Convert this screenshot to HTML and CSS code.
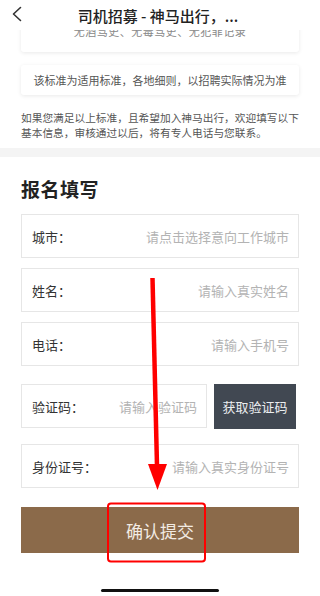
FILE: index.html
```html
<!DOCTYPE html>
<html>
<head>
    <title>司机招募</title>
    <link rel="stylesheet" href="styles.css">
</head>
<body>
    <div class="page">
        <div class="header">
            <svg class="back" width="12" height="16" viewBox="0 0 12 16">
                <path d="M9.5 1.5 L2.5 8 L9.5 14.5" fill="none" stroke="#333" stroke-width="1.6" stroke-linecap="round" stroke-linejoin="round"/>
            </svg>
            <div class="title">司机招募 - 神马出行，...</div>
        </div>

        <div class="intro">
            <div class="card card-top">无酒驾史、无毒驾史、无犯罪记录</div>
            <div class="card card-rule">该标准为适用标准，各地细则，以招聘实际情况为准</div>
            <p class="note">如果您满足以上标准，且希望加入神马出行，欢迎填写以下基本信息，审核通过以后，将有专人电话与您联系。</p>
        </div>

        <div class="band"></div>

        <form class="form">
            <h2>报名填写</h2>
            <div class="field">
                <span class="label">城市：</span>
                <span class="hint">请点击选择意向工作城市</span>
            </div>
            <div class="field">
                <span class="label">姓名：</span>
                <span class="hint">请输入真实姓名</span>
            </div>
            <div class="field">
                <span class="label">电话：</span>
                <span class="hint">请输入手机号</span>
            </div>
            <div class="code-row">
                <div class="field code-field">
                    <span class="label">验证码：</span>
                    <span class="hint">请输入验证码</span>
                </div>
                <button type="button" class="code-btn">获取验证码</button>
            </div>
            <div class="field field-id">
                <span class="label">身份证号：</span>
                <span class="hint">请输入真实身份证号</span>
            </div>
            <button type="button" class="submit">确认提交</button>
        </form>

        <div class="home-bar"></div>

        <!-- annotation drawn over the screenshot -->
        <svg class="marks" width="320" height="596" viewBox="0 0 320 596">
            <line x1="152.5" y1="278" x2="157" y2="466" stroke="#f00" stroke-width="4.5"/>
            <polygon points="148,464 167,464 157.5,490" fill="#f00"/>
            <rect x="108" y="503.5" width="97" height="58" rx="3" fill="none" stroke="#f00" stroke-width="2"/>
        </svg>
    </div>
</body>
</html>
```

FILE: styles.css
```css
body {
    margin: 0;
    font-family: "Noto Sans CJK SC", "Noto Sans", sans-serif;
    background: #ffffff;
    color: #333;
}
.page {
    position: relative;
    width: 320px;
    height: 596px;
    overflow: hidden;
    background: #ffffff;
}
.header {
    position: relative;
    z-index: 2;
    height: 30px;
    display: flex;
    align-items: center;
    justify-content: center;
    background: #ffffff;
}
.back {
    position: absolute;
    left: 11px;
    top: 6px;
}
.title {
    font-size: 15px;
    font-weight: 500;
    color: #222;
    margin-left: -4px;
}
.intro {
    padding: 0 21px 8px;
}
.card {
    background: #fff;
    box-shadow: 0 1px 4px rgba(0, 0, 0, 0.09);
    border-radius: 3px;
    text-align: center;
    font-size: 11px;
    color: #555;
}
.card-top {
    margin-top: -14px;
    height: 36px;
    line-height: 31px;
    color: #888;
    letter-spacing: 0.5px;
}
.card-rule {
    margin-top: 13px;
    height: 30px;
    line-height: 30px;
}
.note {
    margin: 15px 0 0;
    font-size: 10.7px;
    line-height: 15px;
    color: #555;
}
.band {
    height: 9px;
    background: #f4f4f4;
}
.form {
    padding: 0 21px;
}
.form h2 {
    margin: 20px 0 13px;
    font-size: 19px;
    line-height: 24px;
    font-weight: 700;
    color: #222;
    letter-spacing: 0.5px;
}
.field {
    box-sizing: border-box;
    height: 44px;
    border: 1px solid #e6e6e6;
    display: flex;
    align-items: center;
    justify-content: space-between;
    padding: 0 9px 0 10px;
    margin-bottom: 10px;
    font-size: 13px;
}
.label {
    color: #333;
}
.hint {
    color: #b3b3b3;
}
.code-row {
    display: flex;
    gap: 7px;
    margin-top: 18px;
    margin-bottom: 15px;
}
.code-row .field {
    margin-bottom: 0;
}
.code-field {
    width: 186px;
}
.code-btn {
    width: 82px;
    height: 45px;
    border: none;
    background: #414852;
    color: #eceef0;
    font-family: inherit;
    font-size: 13px;
    padding: 0;
}
.field-id {
    margin-bottom: 19px;
}
.submit {
    display: block;
    width: 100%;
    height: 46px;
    border: none;
    background: #8b6a4a;
    color: #f2ebe3;
    font-family: inherit;
    font-size: 17px;
    padding: 0;
}
.home-bar {
    position: absolute;
    left: 101px;
    bottom: 4px;
    width: 118px;
    height: 3px;
    border-radius: 2px;
    background: #111;
}
.marks {
    position: absolute;
    left: 0;
    top: 0;
    pointer-events: none;
}
```
